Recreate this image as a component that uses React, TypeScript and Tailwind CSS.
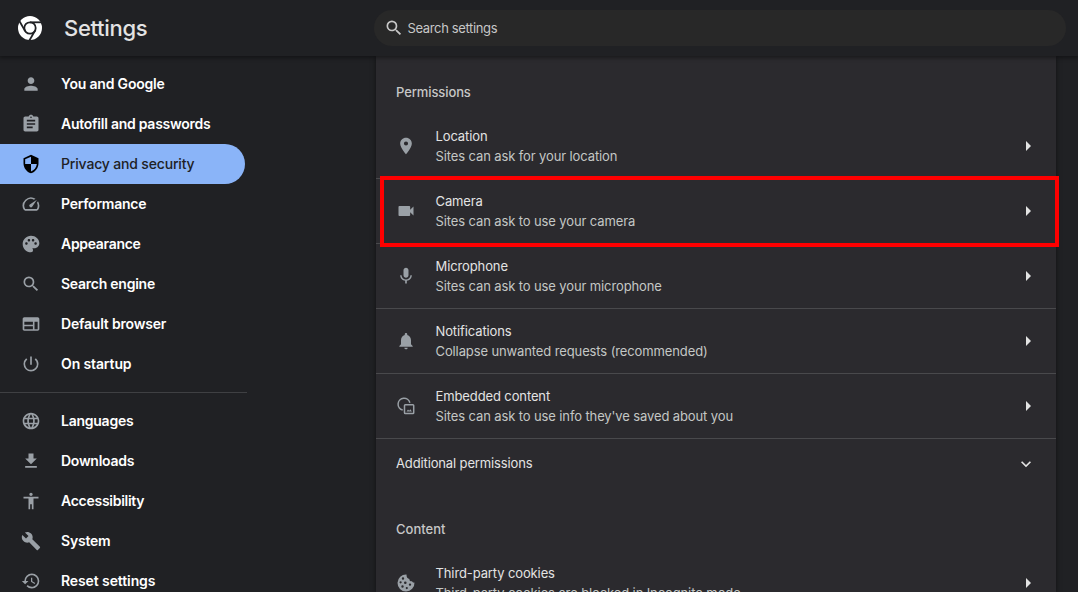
import type { ReactNode } from "react";
import {
    MdAccessibility,
    MdArrowRight,
    MdAssignment,
    MdBuild,
    MdFileDownload,
    MdHistory,
    MdKeyboardArrowDown,
    MdLanguage,
    MdLocationOn,
    MdMic,
    MdNotifications,
    MdPalette,
    MdPerson,
    MdPowerSettingsNew,
    MdSearch,
    MdSecurity,
    MdVideocam,
} from "react-icons/md";

const ChromeLogo = () => (
    <svg className="size-6" viewBox="0 0 24 24">
        <circle cx="12" cy="12" r="12" fill="#fff" />
        <g fill="none" stroke="#202124" strokeWidth="1.8">
            <circle cx="12" cy="12" r="5.7" />
            <path d="M12 6.3h12" />
            <path d="M12 6.3h12" transform="rotate(120 12 12)" />
            <path d="M12 6.3h12" transform="rotate(240 12 12)" />
        </g>
    </svg>
);

const SpeedIcon = () => (
    <svg className="size-5" viewBox="0 0 24 24" fill="currentColor">
        <path d="M20.38 8.57l-1.23 1.85a8 8 0 0 1-.22 7.58H5.07A8 8 0 0 1 15.58 6.85l1.85-1.23A10 10 0 0 0 3.35 19a2 2 0 0 0 1.72 1h13.85a2 2 0 0 0 1.74-1 10 10 0 0 0-.27-10.44zm-9.79 6.84a2 2 0 0 0 2.83 0l5.66-8.49-8.49 5.66a2 2 0 0 0 0 2.83z" />
    </svg>
);

const BrowserIcon = () => (
    <svg className="size-5" viewBox="0 0 24 24" fill="currentColor">
        <path
            d="M20 4H4c-1.1 0-2 .9-2 2v12c0 1.1.9 2 2 2h16c1.1 0 2-.9 2-2V6c0-1.1-.9-2-2-2zM4 9.4h10.3v3.6H4zM4 14.6h10.3v3.6H4zM20 18.2h-3.8V9.4H20z"
            fillRule="evenodd"
        />
    </svg>
);

const EmbeddedIcon = () => (
    <svg className="size-5" viewBox="0 0 20 20" fill="none" stroke="currentColor" strokeWidth="1.5">
        <path d="M6.7 14A6 6 0 1 1 13.900 6.7" />
        <rect x="8.5" y="8.75" width="9.2" height="8.7" rx="0.8" />
        <path d="M10.5 15.6l1.5-2.1 1.2 1.3 1.1-1.6 1.6 2.4z" fill="currentColor" stroke="none" />
    </svg>
);

const CookieIcon = () => (
    <svg className="size-5" viewBox="0 0 20 20" fill="currentColor">
        <path
            fillRule="evenodd"
            d="M10.5 1.5a8.5 8.5 0 1 0 8 8.1c-1.1.2-2.1-.3-2.5-1.3-1.5.3-2.8-.8-2.6-2.4-1.7-.1-3.1-1.8-2.9-4.4zM7 4.3a1.2 1.2 0 1 1 0 2.4 1.2 1.2 0 0 1 0-2.4zM4.6 8.2a1.1 1.1 0 1 1 0 2.2 1.1 1.1 0 0 1 0-2.2zM9.3 8.5a1.3 1.3 0 1 1 0 2.6 1.3 1.3 0 0 1 0-2.6zM14 10.4a1.2 1.2 0 1 1 0 2.4 1.2 1.2 0 0 1 0-2.4zM6.5 12.3a1.2 1.2 0 1 1 0 2.4 1.2 1.2 0 0 1 0-2.4zM10.8 14a1.1 1.1 0 1 1 0 2.2 1.1 1.1 0 0 1 0-2.2z"
        />
    </svg>
);

type NavItem = { label: string; icon: ReactNode; tracking: string; active?: boolean };

const mainItems: NavItem[] = [
    { label: "You and Google", icon: <MdPerson size={20} />, tracking: "tracking-[-0.19px]" },
    { label: "Autofill and passwords", icon: <MdAssignment size={20} />, tracking: "tracking-[-0.25px]" },
    { label: "Privacy and security", icon: <MdSecurity size={20} />, tracking: "tracking-[-0.17px]", active: true },
    { label: "Performance", icon: <SpeedIcon />, tracking: "tracking-[-0.25px]" },
    { label: "Appearance", icon: <MdPalette size={20} />, tracking: "tracking-[-0.3px]" },
    { label: "Search engine", icon: <MdSearch size={20} />, tracking: "tracking-[-0.25px]" },
    { label: "Default browser", icon: <BrowserIcon />, tracking: "tracking-[-0.2px]" },
    { label: "On startup", icon: <MdPowerSettingsNew size={20} />, tracking: "tracking-[-0.12px]" },
];

const moreItems: NavItem[] = [
    { label: "Languages", icon: <MdLanguage size={20} />, tracking: "tracking-[-0.25px]" },
    { label: "Downloads", icon: <MdFileDownload size={20} />, tracking: "tracking-[-0.27px]" },
    { label: "Accessibility", icon: <MdAccessibility size={20} />, tracking: "tracking-[-0.27px]" },
    { label: "System", icon: <MdBuild size={20} />, tracking: "tracking-[-0.2px]" },
    { label: "Reset settings", icon: <MdHistory size={20} />, tracking: "tracking-[-0.1px]" },
];

const permissions = [
    { title: "Location", detail: "Sites can ask for your location", icon: <MdLocationOn size={20} /> },
    { title: "Camera", detail: "Sites can ask to use your camera", icon: <MdVideocam size={20} />, highlighted: true },
    { title: "Microphone", detail: "Sites can ask to use your microphone", icon: <MdMic size={20} /> },
    { title: "Notifications", detail: "Collapse unwanted requests (recommended)", icon: <MdNotifications size={20} /> },
    { title: "Embedded content", detail: "Sites can ask to use info they've saved about you", icon: <EmbeddedIcon /> },
];

const NavLink = ({ item }: { item: NavItem }) => (
    <a
        href="#"
        className={`flex h-10 items-center pl-[21px] text-sm ${
            item.active
                ? "w-[245px] rounded-r-full bg-[#8ab4f8] font-medium text-[#202124]"
                : "font-semibold text-white"
        }`}
    >
        <span className={item.active ? "text-black" : "text-[#9aa0a6]"}>{item.icon}</span>
        <span className={`ml-5 whitespace-nowrap ${item.tracking}`}>{item.label}</span>
    </a>
);

type RowProps = { title: string; detail: string; icon: ReactNode; highlighted?: boolean; first?: boolean };

const SettingRow = ({ title, detail, icon, highlighted, first }: RowProps) => (
    <div className={`relative flex items-center px-5 ${first ? "h-16" : "h-[65px] border-t border-[#49494c]"}`}>
        <span className="text-[#9aa0a6]">{icon}</span>
        <div className="ml-[19.5px] flex-1 text-[13px] leading-5 tracking-[-0.115px] whitespace-nowrap">
            <div className="text-[#e3e3e3]">{title}</div>
            <div className="text-[#c4c7c5]">{detail}</div>
        </div>
        <MdArrowRight size={24} className="-mr-1 text-[#e3e3e3]" />
        {highlighted ? (
            <div className="absolute -top-[3px] -right-[3px] -bottom-[4px] left-1 z-10 border-4 border-[#fe0000]" />
        ) : null}
    </div>
);

export default function App() {
    return (
        <div className="flex h-[592px] w-[1078px] flex-col overflow-hidden bg-[#202124] font-['Inter','Liberation_Sans',sans-serif]">
            <header className="z-20 flex h-14 shrink-0 items-center bg-[#202124] pr-3 pl-[18px] shadow-[0_1px_4px_1px_rgba(0,0,0,0.4)]">
                <ChromeLogo />
                <h1 className="ml-[22px] w-[310px] text-[22px] font-medium tracking-[-0.3px] text-[#e3e3e3]">Settings</h1>
                <div className="flex h-9 flex-1 items-center rounded-full bg-[#282828] pl-[10px] text-[#c7c7c7]">
                    <MdSearch size={20} />
                    <span className="ml-[3.5px] pt-px text-[13px] tracking-[-0.36px]">Search settings</span>
                </div>
            </header>
            <div className="flex min-h-0 flex-1">
                <nav className="w-[376px] shrink-0 pt-2">
                    {mainItems.map((item) => (
                        <NavLink key={item.label} item={item} />
                    ))}
                    <div className="mt-2 mb-2 h-px w-[247px] bg-[#3f4043]" />
                    {moreItems.map((item) => (
                        <NavLink key={item.label} item={item} />
                    ))}
                </nav>
                <main className="w-[680px] shrink-0 bg-[#2b2a2e] shadow-[0_1px_5px_rgba(0,0,0,0.5)]">
                    <h2 className="flex h-[58px] items-center px-5 pt-4 text-[13px] font-medium tracking-[-0.1px] text-[#c7c7c7]">
                        Permissions
                    </h2>
                    {permissions.map((row, i) => (
                        <SettingRow key={row.title} {...row} first={i === 0} />
                    ))}
                    <div className="flex h-[50px] items-center justify-between border-t border-[#49494c] px-5 text-[13px] tracking-[-0.13px] text-[#e3e3e3]">
                        Additional permissions
                        <MdKeyboardArrowDown size={20} />
                    </div>
                    <h2 className="flex h-[63px] items-center px-5 pt-[21px] text-[13px] font-medium text-[#c7c7c7]">
                        Content
                    </h2>
                    <SettingRow
                        title="Third-party cookies"
                        detail="Third-party cookies are blocked in Incognito mode"
                        icon={<CookieIcon />}
                        first
                    />
                </main>
            </div>
        </div>
    );
}
